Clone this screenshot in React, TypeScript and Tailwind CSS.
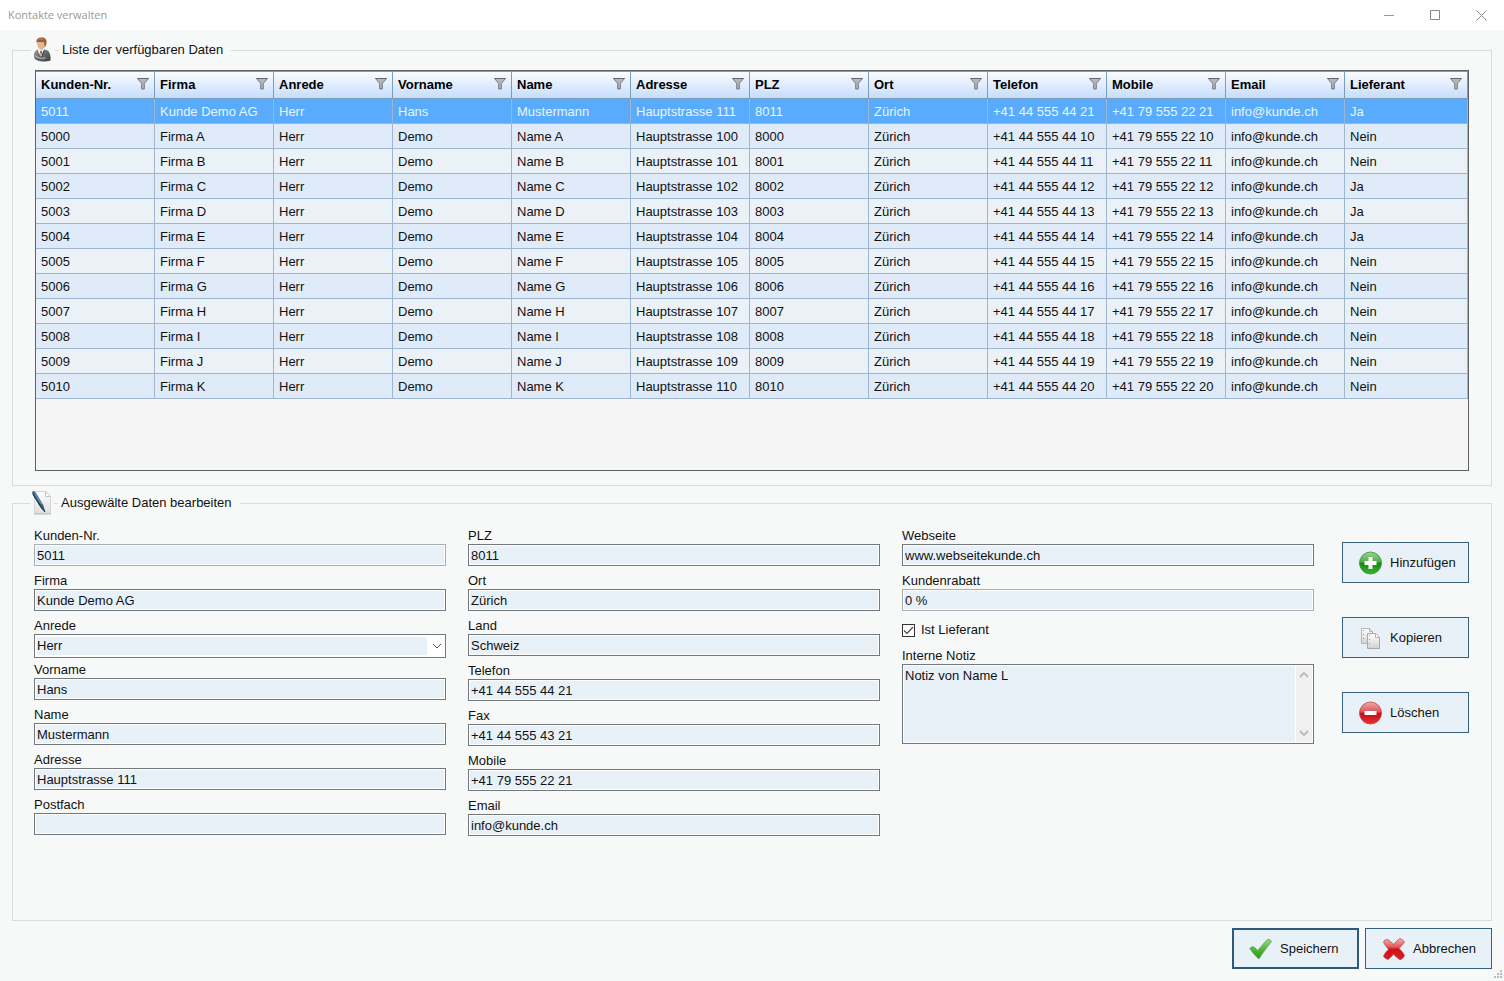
import { useState } from 'react';
import type { ReactNode } from 'react';

interface Contact {
  nr: string;
  firma: string;
  vorname: string;
  name: string;
  adresse: string;
  plz: string;
  telefon: string;
  mobile: string;
  lieferant: string;
}

const columns = [
  'Kunden-Nr.',
  'Firma',
  'Anrede',
  'Vorname',
  'Name',
  'Adresse',
  'PLZ',
  'Ort',
  'Telefon',
  'Mobile',
  'Email',
  'Lieferant',
];

const suppliers = ['C', 'D', 'E'];

const contacts: Contact[] = [
  {
    nr: '5011',
    firma: 'Kunde Demo AG',
    vorname: 'Hans',
    name: 'Mustermann',
    adresse: 'Hauptstrasse 111',
    plz: '8011',
    telefon: '+41 44 555 44 21',
    mobile: '+41 79 555 22 21',
    lieferant: 'Ja',
  },
  ...'ABCDEFGHIJK'.split('').map((letter, i) => ({
    nr: String(5000 + i),
    firma: `Firma ${letter}`,
    vorname: 'Demo',
    name: `Name ${letter}`,
    adresse: `Hauptstrasse ${100 + i}`,
    plz: String(8000 + i),
    telefon: `+41 44 555 44 ${10 + i}`,
    mobile: `+41 79 555 22 ${10 + i}`,
    lieferant: suppliers.includes(letter) ? 'Ja' : 'Nein',
  })),
];

const FilterIcon = () => (
  <svg width="12" height="14" viewBox="0 0 12 14" aria-hidden="true">
    <path d="M.5 .5h11L7.300 5.500v5.500H4.700V5.500z" fill="#b4b6b9" stroke="#77797d" strokeWidth="1" strokeLinejoin="round" />
    <path d="M.5 .5h11" stroke="#66686c" />
  </svg>
);

const PersonIcon = () => (
  <svg width="20" height="26" viewBox="0 0 20 26" aria-hidden="true">
    <defs>
      <linearGradient id="suit" x1="0" y1="0" x2="1" y2="1">
        <stop offset="0" stopColor="#9a9c9d" />
        <stop offset="0.5" stopColor="#66696a" />
        <stop offset="1" stopColor="#3c3f40" />
      </linearGradient>
    </defs>
    <path d="M5 12.500C2.500 13.500 1 15 1 18.500c0 2.500.8 4 2.500 4.500 1.500.7 3 1.500 5.500 1.500 3 .3 6-.2 8.500-1 .5-3-.3-7-1.800-9-.9-1.200-2.700-1.500-4.200-2z" fill="url(#suit)" />
    <path d="M5.500 11l-.3 3.500 3 5.500 2.600-5.500.2-3z" fill="#f4f4f4" />
    <path d="M7 14l.8 5 1.500-3.500L8.500 13.500z" fill="#9c5a4a" />
    <path d="M2 18.500c2.500 2.700 6 3.300 10.500 2.300" fill="none" stroke="#c6c8c9" strokeWidth="1" />
    <path d="M11 13.500l-2.500 7" stroke="#3a3d3e" strokeWidth="1" />
    <path d="M4 5c0-2 2-3.500 4.500-3.500S13 3.500 12.800 6.500c-.2 3-1.500 5.800-4 6.200C5.800 13 4 9 4 5z" fill="#e5b592" />
    <path d="M3.500 5.500C3 2.500 5.500.6 8.500.6c3.500 0 5.500 2 5 5.400-.2 1.800-.7 3-1.500 4-.7-1.500-.2-3.500-1.500-5C8.500 5.500 5.500 4.500 3.500 5.500z" fill="#9b5c39" />
    <path d="M5.500 2.800c1.500-1.200 3.500-1.200 5 0" stroke="#c58a5c" strokeWidth="1" fill="none" />
  </svg>
);

const EditIcon = () => (
  <svg width="20" height="26" viewBox="0 0 20 26" aria-hidden="true">
    <defs>
      <linearGradient id="sheet" x1="0" y1="0" x2="0" y2="1">
        <stop offset="0" stopColor="#fff" />
        <stop offset="1" stopColor="#dedede" />
      </linearGradient>
    </defs>
    <path d="M2.500 1.500h11l5 5v17h-16z" fill="url(#sheet)" stroke="#d6d6d6" />
    <path d="M13.500 1.500v5h5z" fill="#fff" stroke="#c4c4c4" />
    <path d="M2 24h17" stroke="#b9b9b9" />
    <path d="M.3 1.800C1.500.8 3 1.500 4 3l7.500 12.500 1.700 6.500-4.700-4.500L1.500 6C.5 4.500-.2 2.800.3 1.800z" fill="#3d6480" />
    <path d="M1 4l8 13 4 4.800" stroke="#213c50" strokeWidth="1.200" fill="none" />
    <path d="M2.800 3.500l6.500 10.500" stroke="#7fa3bb" strokeWidth="1" />
    <circle cx="5" cy="20.500" r="1.500" fill="#f0ddd6" />
  </svg>
);

const AddIcon = () => (
  <svg width="24" height="24" viewBox="0 0 24 24" aria-hidden="true">
    <defs>
      <linearGradient id="green" x1="0" y1="0" x2="0" y2="1">
        <stop offset="0" stopColor="#9bd394" />
        <stop offset="0.45" stopColor="#4fae45" />
        <stop offset="0.52" stopColor="#158a10" />
        <stop offset="1" stopColor="#37b82b" />
      </linearGradient>
    </defs>
    <circle cx="11.500" cy="12" r="11" fill="url(#green)" stroke="#3c8f37" strokeWidth=".8" />
    <path d="M9.500 6h4v4h4v4h-4v4h-4v-4h-4v-4h4z" fill="#fff" />
  </svg>
);

const CopyIcon = () => (
  <svg width="24" height="24" viewBox="0 0 24 24" aria-hidden="true">
    <defs>
      <linearGradient id="page" x1="0" y1="0" x2="0" y2="1">
        <stop offset="0" stopColor="#fff" />
        <stop offset="1" stopColor="#d2d2d2" />
      </linearGradient>
    </defs>
    <path d="M2.500 2.500h8l3 3v12h-11z" fill="url(#page)" stroke="#b4b4b4" />
    <path d="M10.500 2.500v3h3" fill="none" stroke="#b4b4b4" />
    <path d="M4.500 4v12" stroke="#999" strokeDasharray="1 3" />
    <path d="M8.500 7.500h8l4 4v11h-12z" fill="url(#page)" stroke="#aaa" />
    <path d="M16.500 7.500v4h4z" fill="#fff" stroke="#b4b4b4" />
    <path d="M10.500 9v12" stroke="#999" strokeDasharray="1 3" />
  </svg>
);

const RemoveIcon = () => (
  <svg width="24" height="24" viewBox="0 0 24 24" aria-hidden="true">
    <defs>
      <linearGradient id="red" x1="0" y1="0" x2="0" y2="1">
        <stop offset="0" stopColor="#f2abab" />
        <stop offset="0.45" stopColor="#dc5558" />
        <stop offset="0.52" stopColor="#c40f17" />
        <stop offset="1" stopColor="#e8303a" />
      </linearGradient>
    </defs>
    <circle cx="11.500" cy="12" r="11" fill="url(#red)" stroke="#b9484c" strokeWidth=".8" />
    <path d="M5.500 10h12v4h-12z" fill="#fff" />
  </svg>
);

const SaveIcon = () => (
  <svg width="24" height="24" viewBox="0 0 24 24" aria-hidden="true">
    <defs>
      <linearGradient id="tick" x1="0" y1="0" x2="0" y2="1">
        <stop offset="0" stopColor="#97dc7f" />
        <stop offset="0.5" stopColor="#4cba3a" />
        <stop offset="1" stopColor="#2a9620" />
      </linearGradient>
    </defs>
    <path
      d="M.8 11.500c1.200-1.500 2.800-2.300 4.200-1.500 1.200.7 2.400 2 3.800 3.500C12 9.500 15.500 5 19 2.200c1.500.3 3 1 3.500 2.300C18 10 14 15.500 9.800 22 6.500 19 3.500 15.500.8 11.500z"
      fill="url(#tick)"
      stroke="#5d9a55"
      strokeWidth=".7"
      strokeLinejoin="round"
    />
  </svg>
);

const CancelIcon = () => (
  <svg width="24" height="24" viewBox="0 0 24 24" aria-hidden="true">
    <defs>
      <linearGradient id="cross" x1="0" y1="0" x2="0" y2="1">
        <stop offset="0" stopColor="#f3b0ae" />
        <stop offset="0.4" stopColor="#e2575a" />
        <stop offset="0.5" stopColor="#cf1219" />
        <stop offset="1" stopColor="#dd1c24" />
      </linearGradient>
    </defs>
    <path
      d="M1.500 5c.5-1.500 2-2.500 4-2.700 2 1.200 4 3 6 5 2-2 4-4.300 6.300-5.800 2 .5 4 2 4.700 3.500-1.500 2.500-3.700 4.500-5.500 6.500 2.200 2 4.500 4.500 5.500 7-.8 2-2.500 3.700-4.500 4.300-2.500-1.500-4.500-3.800-6.500-5.600-1.800 2-3.500 4-5.500 5.300-2-.5-4-2-4.500-3.500C2.500 16.500 4.500 14.500 6.500 12.500 4.500 10 2.500 7.500 1.500 5z"
      fill="url(#cross)"
      stroke="#b5464a"
      strokeWidth=".7"
      strokeLinejoin="round"
    />
  </svg>
);

const Chevron = ({ up = false, bold = false }: { up?: boolean; bold?: boolean }) => (
  <svg width="10" height="6" viewBox="0 0 10 6" aria-hidden="true">
    <path
      d={up ? 'M1 5l4-4 4 4' : 'M1 1l4 4 4-4'}
      fill="none"
      stroke={bold ? '#bdbdbd' : '#555'}
      strokeWidth={bold ? 2 : 1}
    />
  </svg>
);

interface GroupProps {
  title: string;
  icon: ReactNode;
  className?: string;
  children: ReactNode;
}

const Group = ({ title, icon, className = '', children }: GroupProps) => (
  <fieldset className={`min-w-0 border border-[#dadcdc] ${className}`}>
    <legend className="-ml-1">
      <span className="flex h-[26px] items-center pr-2">
        <span className="pl-0.5 pr-0.5">{icon}</span>
        <span className="mr-[3px] h-px w-1 bg-[#dadcdc]" />
        {title}
      </span>
    </legend>
    {children}
  </fieldset>
);

interface FieldProps {
  label: string;
  value?: string;
  readOnly?: boolean;
}

const Field = ({ label, value = '', readOnly = false }: FieldProps) => (
  <label className="block h-[45px]">
    <span className="block h-[17px] leading-[17px]">{label}</span>
    <input
      type="text"
      defaultValue={value}
      readOnly={readOnly}
      className={`block h-[22px] w-full border bg-[#e9f1f8] px-0.5 shadow-[inset_0_0_0_1px_#fff] outline-none ${
        readOnly ? 'border-[#abadb3]' : 'border-[#75787b]'
      }`}
    />
  </label>
);

interface ActionButtonProps {
  label: string;
  icon: ReactNode;
  primary?: boolean;
}

const ActionButton = ({ label, icon, primary = false }: ActionButtonProps) => (
  <button
    type="button"
    className={`flex h-[41px] w-[127px] items-center gap-[7px] bg-[#e9f1f8] hover:bg-[#dceaf7] ${
      primary ? 'border-2 border-[#2c5a78] pl-[15px]' : 'border border-[#35607f] pl-4'
    }`}
  >
    {icon}
    {label}
  </button>
);

const TitleBar = () => (
  <header className="flex h-[30px] items-center justify-between bg-white pl-2 text-[#999]">
    <h1 className="font-['Open_Sans',sans-serif] text-[11px]">Kontakte verwalten</h1>
    <div className="flex">
      <button type="button" aria-label="Minimieren" className="flex h-7 w-[45px] items-center justify-center">
        <svg width="11" height="11" viewBox="0 0 11 11">
          <path d="M0 5.500h10" stroke="#999" />
        </svg>
      </button>
      <button type="button" aria-label="Maximieren" className="flex h-7 w-[46px] items-center justify-center">
        <svg width="11" height="11" viewBox="0 0 11 11">
          <path d="M.5 .5h9v9H.5z" fill="none" stroke="#888" />
        </svg>
      </button>
      <button type="button" aria-label="Schliessen" className="flex h-7 w-[46px] items-center justify-center">
        <svg width="11" height="11" viewBox="0 0 11 11">
          <path d="M.5 .5l10 10M10.500 .5l-10 10" stroke="#888" />
        </svg>
      </button>
    </div>
  </header>
);

const ContactTable = () => {
  const [selected, setSelected] = useState('5011');

  return (
    <div className="min-h-[401px] overflow-x-auto border border-[#5d6266] bg-[#f5f5f5]">
      <table className="w-full min-w-[1400px] table-fixed border-separate border-spacing-0 text-left">
        <thead>
          <tr>
            {columns.map((column) => (
              <th
                key={column}
                className="h-7 w-[119px] border-b border-r border-t border-b-[#7b9ebd] border-r-[#7b9ebd] border-t-[#8b97a5] bg-linear-to-b from-[#fafcff] to-[#c6ddfb] px-[5px] text-black last:w-auto"
              >
                <div className="flex items-center justify-between">
                  {column}
                  <FilterIcon />
                </div>
              </th>
            ))}
          </tr>
        </thead>
        <tbody>
          {contacts.map((c) => (
            <tr
              key={c.nr}
              onClick={() => setSelected(c.nr)}
              className={
                c.nr === selected ? 'bg-[#59abfd] text-[#e6f6ff]' : 'odd:bg-[#eaf1f7] even:bg-[#dfebf8]'
              }
            >
              {[
                c.nr,
                c.firma,
                'Herr',
                c.vorname,
                c.name,
                c.adresse,
                c.plz,
                'Zürich',
                c.telefon,
                c.mobile,
                'info@kunde.ch',
                c.lieferant,
              ].map((value, i) => (
                <td
                  key={i}
                  className="h-[25px] whitespace-nowrap border-b border-r border-[#9db5cf] pl-[5px] pt-0.5"
                >
                  {value}
                </td>
              ))}
            </tr>
          ))}
        </tbody>
      </table>
    </div>
  );
};

export default function App() {
  return (
    <div className="flex min-h-screen flex-col bg-[#f7f9f9] font-['Liberation_Sans',Arial,sans-serif] text-[13px] leading-4 text-[#111]">
      <TitleBar />
      <main className="flex flex-1 flex-col px-3 pt-[7px]">
        <Group title="Liste der verfügbaren Daten" icon={<PersonIcon />} className="px-[22px] pb-[14px]">
          <div className="pt-[7px]">
            <ContactTable />
          </div>
        </Group>

        <Group title="Ausgewälte Daten bearbeiten" icon={<EditIcon />} className="mt-1 flex-1 pl-[21px] pr-[22px]">
          <div className="flex gap-7 pt-[11px]">
            <div className="grid flex-1 grid-cols-3 gap-x-[22px]">
              <div>
                <Field label="Kunden-Nr." value="5011" readOnly />
                <Field label="Firma" value="Kunde Demo AG" />
                <label className="block h-11">
                  <span className="block h-[17px] leading-[17px]">Anrede</span>
                  <span className="relative block bg-white">
                    <select
                      defaultValue="Herr"
                      className="block h-6 w-full appearance-none border border-[#75787b] bg-[#e9f1f8] bg-clip-content py-0.5 pl-0.5 pr-[18px] outline-none"
                    >
                      <option>Herr</option>
                      <option>Frau</option>
                    </select>
                    <span className="pointer-events-none absolute inset-y-0 right-1 flex items-center">
                      <Chevron />
                    </span>
                  </span>
                </label>
                <Field label="Vorname" value="Hans" />
                <Field label="Name" value="Mustermann" />
                <Field label="Adresse" value="Hauptstrasse 111" />
                <Field label="Postfach" />
              </div>
              <div>
                <Field label="PLZ" value="8011" />
                <Field label="Ort" value="Zürich" />
                <Field label="Land" value="Schweiz" />
                <Field label="Telefon" value="+41 44 555 44 21" />
                <Field label="Fax" value="+41 44 555 43 21" />
                <Field label="Mobile" value="+41 79 555 22 21" />
                <Field label="Email" value="info@kunde.ch" />
              </div>
              <div>
                <Field label="Webseite" value="www.webseitekunde.ch" />
                <Field label="Kundenrabatt" value="0 %" readOnly />
                <label className="flex h-[30px] items-center gap-1.5 pb-1">
                  <span className="relative flex">
                    <input
                      type="checkbox"
                      defaultChecked
                      className="peer size-[13px] appearance-none border border-[#333] bg-white"
                    />
                    <svg
                      width="13"
                      height="13"
                      viewBox="0 0 13 13"
                      className="pointer-events-none invisible absolute inset-0 peer-checked:visible"
                    >
                      <path d="M2 6.500l3 3 6-6.500" fill="none" stroke="#444" strokeWidth="1.200" />
                    </svg>
                  </span>
                  Ist Lieferant
                </label>
                <label htmlFor="notiz" className="block h-[17px] leading-[17px]">
                  Interne Notiz
                </label>
                <div className="flex h-20 border border-[#75787b] bg-white p-px">
                  <textarea
                    id="notiz"
                    defaultValue="Notiz von Name L"
                    className="block flex-1 resize-none overflow-hidden bg-[#e9f1f8] px-px pt-0.5 outline-none"
                  />
                  <div className="ml-px flex w-4 flex-col items-center justify-between bg-[#f0f0f0] py-1.5">
                    <Chevron up bold />
                    <Chevron bold />
                  </div>
                </div>
              </div>
            </div>

            <div className="flex flex-col gap-[34px] pt-[15px]">
              <ActionButton label="Hinzufügen" icon={<AddIcon />} />
              <ActionButton label="Kopieren" icon={<CopyIcon />} />
              <ActionButton label="Löschen" icon={<RemoveIcon />} />
            </div>
          </div>
        </Group>
      </main>

      <footer className="relative flex justify-end gap-1.5 px-3 pb-3 pt-[7px]">
        <ActionButton label="Speichern" icon={<SaveIcon />} primary />
        <ActionButton label="Abbrechen" icon={<CancelIcon />} />
        <svg width="9" height="9" viewBox="0 0 9 9" className="absolute bottom-0.5 right-px" aria-hidden="true">
          <path d="M6 0h2v2H6zM3 3h2v2H3zM6 3h2v2H6zM0 6h2v2H0zM3 6h2v2H3zM6 6h2v2H6z" fill="#bcbcbc" />
        </svg>
      </footer>
    </div>
  );
}
